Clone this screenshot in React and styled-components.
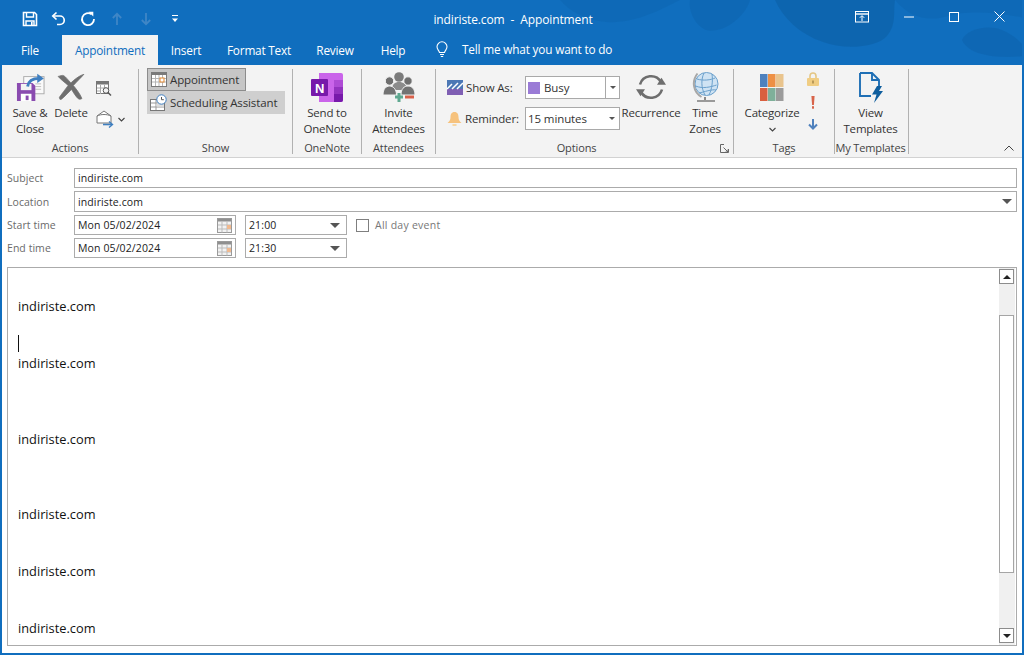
import React from 'react';
import styled, { createGlobalStyle } from 'styled-components';

const UI = `"Open Sans", "Noto Sans", "Liberation Sans", sans-serif`;
const Global = createGlobalStyle`
  html, body { margin: 0; padding: 0; background: #fff; }
  * { box-sizing: border-box; }
  body { font-family: ${UI}; font-size: 11.5px; color: #333; overflow: hidden; }
`;

const Window = styled.div`
  width: 1024px; height: 655px; display: flex; flex-direction: column;
  border: 2px solid #106ebe; border-top: 0; background: #fff; overflow: hidden;
`;
const Chrome = styled.div`
  position: relative; margin: 0 -2px; padding: 0 2px; height: 65px;
  background: #106ebe; flex: none; overflow: hidden;
`;
const Backdrop = styled.svg`
  position: absolute; inset: 0; width: 1024px; height: 65px;
`;
const TitleBar = styled.div`
  position: relative; height: 35px; display: grid; grid-template-columns: 1fr auto 1fr; align-items: center;
  padding-top: 2px; color: #fff;
`;
const Qat = styled.div`
  display: flex; align-items: center; gap: 13px; padding-left: 20px;
`;
const QatMoreSlot = styled.div`
  margin-left: 4px;
`;
const Title = styled.div`
  font-size: 12px; color: #fff; white-space: pre; letter-spacing: -0.12px; padding-top: 2px; padding-left: 2px;
`;
const WinControls = styled.div`
  display: flex; justify-content: flex-end; align-items: center; gap: 35px; padding-right: 17px; margin-top: -4px;
`;
const TabRow = styled.div`
  position: relative; height: 30px; display: flex; align-items: stretch;
`;
const Tab = styled.div`
  width: ${p => p.$w}px; display: flex; align-items: center; justify-content: center;
  font-size: 11.8px; letter-spacing: -0.2px; padding-bottom: 1px;
  color: ${p => p.$active ? '#106ebe' : '#fff'};
  background: ${p => p.$active ? '#f3f3f3' : 'transparent'};
  margin-right: ${p => p.$mr || 0}px;
`;
const TellMe = styled.div`
  display: flex; align-items: center; gap: 12px; color: #fff; font-size: 11.8px; letter-spacing: -0.18px; padding-left: 14px; padding-bottom: 2px;
`;
const Ribbon = styled.div`
  flex: none; height: 93px; background: #f3f3f3; border-bottom: 1px solid #d2d2d2;
  display: flex; padding-top: 4px; padding-bottom: 3px;
`;
const Group = styled.div`
  width: ${p => p.$w}px; display: flex; flex-direction: column; border-right: 1px solid #b1b1b1; height: 85px;
`;
const GroupBody = styled.div`
  flex: 1; display: flex; min-height: 0; padding-left: ${p => p.$pl || 0}px;
`;
const GroupLabel = styled.div`
  height: 12px; line-height: 12px; text-align: center; font-size: 11px; color: #444; white-space: nowrap;
  letter-spacing: -0.12px; display: flex; justify-content: center; position: relative;
  padding-right: ${p => p.$pr || 0}px;
`;
const Launcher = styled.svg`
  position: absolute; right: 3px; top: 2px;
`;
const Big = styled.div`
  width: ${p => p.$w}px; display: flex; flex-direction: column; align-items: center; flex: none;
  font-size: 11.5px; line-height: 16px; text-align: center; color: #333; letter-spacing: -0.2px; white-space: nowrap;
`;
const BigIcon = styled.div`
  height: 36px; display: flex; align-items: center; justify-content: center; width: 100%;
`;
const SmallCol = styled.div`
  display: flex; flex-direction: column; align-items: ${p => p.$align || 'flex-start'}; width: ${p => p.$w}px; flex: none;
  padding-top: ${p => p.$pt || 0}px; padding-left: ${p => p.$pl || 0}px; gap: ${p => p.$gap || 0}px;
`;
const SmallRow = styled.div`
  display: flex; align-items: center; gap: 4px;
`;
const ChevronLine = styled.div`
  height: 16px; display: flex; align-items: center;
`;
const ViewStack = styled.div`
  display: flex; flex-direction: column; padding: 0 0 0 8px; align-items: flex-start; margin-top: -1px;
`;
const ViewBtn = styled.div`
  height: 23px; width: ${p => p.$w}px; display: flex; align-items: center; gap: 3px; padding: 0 0 1px 3px;
  font-size: 11.5px; letter-spacing: -0.12px; color: #333; white-space: nowrap;
  background: ${p => p.$on ? '#c6c6c6' : '#cfcfcf'};
  border: ${p => p.$on ? '1px solid #8c8c8c' : '0'};
`;
const OptionLabel = styled.div`
  width: 89px; display: flex; align-items: center; gap: 3px; font-size: 11.5px; letter-spacing: -0.18px; color: #333; padding-left: 11px;
`;
const OptionRow = styled.div`
  display: flex; align-items: center; height: 23px; margin-bottom: 8px;
`;
const OptionStack = styled.div`
  display: flex; flex-direction: column; padding-top: 7px; flex: none; width: 184px;
`;
const RibbonSelect = styled.div`
  width: 95px; height: 23px; display: flex; align-items: center; background: #fff; border: 1px solid #a9a9a9;
  font-size: 11.5px; letter-spacing: -0.1px; color: #333; padding-left: 2px; gap: 4px; position: relative;
`;
const SelectArrow = styled.div`
  margin-left: auto; width: 14px; height: 100%; display: flex; align-items: center; justify-content: center;
  border-left: ${p => p.$split ? '1px solid #a9a9a9' : '0'};
`;
const Swatch = styled.div`
  width: 12px; height: 12px; background: #9a7bd6; flex: none;
`;
const Tri = styled.div`
  width: 0; height: 0; border-left: ${p => p.$s || 3}px solid transparent; border-right: ${p => p.$s || 3}px solid transparent;
  border-${p => p.$up ? 'bottom' : 'top'}: ${p => p.$h || 3}px solid ${p => p.$c || '#555'};
`;
const Collapse = styled.div`
  margin-left: auto; align-self: flex-end; padding: 0 8px 0 0; display: flex; height: 10px; margin-bottom: -1px;
`;

const Form = styled.div`
  flex: 1; min-height: 0; display: flex; flex-direction: column; padding: 10px 5px 7px 5px; background: #fff;
`;
const FieldRow = styled.div`
  display: flex; align-items: center; height: ${p => p.$h || 20}px; margin-bottom: ${p => p.$mb ?? 3}px; flex: none;
`;
const Label = styled.div`
  width: 67px; font-size: 10.5px; color: #6a6a6a; flex: none; letter-spacing: 0.05px;
`;
const Input = styled.div`
  flex: ${p => p.$w ? 'none' : 1}; width: ${p => p.$w ? `${p.$w}px` : 'auto'}; height: 100%;
  border: 1px solid #ababab; background: #fff; display: flex; align-items: center;
  padding: 0 3px; font-size: 10.5px; letter-spacing: 0.12px; color: #222; margin-right: ${p => p.$mr || 0}px;
`;
const InputEnd = styled.div`
  margin-left: auto; display: flex; align-items: center; padding-right: ${p => p.$pr || 0}px;
`;
const Check = styled.div`
  width: 13px; height: 13px; border: 1px solid #7f7f7f; background: #fff; flex: none; margin-right: 6px;
`;
const CheckLabel = styled.div`
  font-size: 10.5px; color: #777; letter-spacing: 0.25px;
`;
const Body = styled.div`
  flex: 1; min-height: 0; margin-top: 9px; border: 1px solid #ababab; display: flex; overflow: hidden;
`;
const Doc = styled.div`
  flex: 1; min-width: 0; padding: 10.5px 0 0 10px; font-family: "Open Sans", sans-serif; font-size: 12.8px; line-height: 18.9px; color: #111; overflow: hidden;
`;
const DocLine = styled.div`
  height: 18.9px; white-space: nowrap; position: relative;
`;
const Caret = styled.span`
  display: inline-block; width: 1px; height: 17px; background: #111; vertical-align: top; margin-top: 0;
`;
const Scrollbar = styled.div`
  width: 16px; flex: none; background: #f0f0f0; margin-right: 1px; display: flex; flex-direction: column; align-items: stretch;
  padding-top: 1px; padding-bottom: 2px;
`;
const ScrollBtn = styled.div`
  height: 15px; width: 15px; border: 1px solid #8c8c8c; background: #fff; display: flex; align-items: center; justify-content: center; flex: none;
`;
const Thumb = styled.div`
  width: 15px; height: 258px; background: #fff; border: 1px solid #a5a5a5; margin-top: 31px; margin-bottom: auto; flex: none;
`;

/* ---------- icons ---------- */
const IconSvg = styled.svg`
  display: block; flex: none;
`;
const Svg = ({ w, h, vw, vh, children }) => <IconSvg width={w} height={h} viewBox={`0 0 ${vw || w} ${vh || h}`} fill="none" preserveAspectRatio="none">{children}</IconSvg>;

const QatSave = () => <Svg w={16} h={16}><path d="M1.5 1.5h11l2 2v11h-13z" stroke="#fff" strokeWidth="1.6" /><path d="M4.5 2v4h7V2M4 14.5V10h8v4.5" stroke="#fff" strokeWidth="1.4" /><rect x="9" y="11" width="1.6" height="3" fill="#fff" /></Svg>;
const QatUndo = () => <Svg w={16} h={16}><path d="M5.5 1.5L1.8 5l3.7 3.5" stroke="#fff" strokeWidth="1.7" /><path d="M2 5h7a4.2 4.2 0 0 1 0 8.5H6" stroke="#fff" strokeWidth="1.7" /></Svg>;
const QatRedo = () => <Svg w={16} h={16}><path d="M11.5 3.3A6 6 0 1 0 14 8" stroke="#fff" strokeWidth="1.8" /><path d="M8.5 0.8h4.8v4.8z" fill="#fff" /></Svg>;
const QatUp = () => <Svg w={16} h={16}><path d="M8 14V3M3.8 7L8 2.8 12.2 7" stroke="#3f86c6" strokeWidth="1.8" /></Svg>;
const QatDown = () => <Svg w={16} h={16}><path d="M8 2v11M3.8 9L8 13.2 12.2 9" stroke="#3f86c6" strokeWidth="1.8" /></Svg>;
const QatMore = () => <Svg w={8} h={12}><path d="M1 2.5h6" stroke="#fff" strokeWidth="1" /><path d="M1 5.5h6L4 9z" fill="#fff" /></Svg>;

const Pop = () => <Svg w={14} h={12}><rect x=".5" y=".5" width="13" height="10.5" stroke="#fff" /><path d="M.5 3h13" stroke="#fff" strokeWidth="1.4" /><path d="M7 10V5M4.8 6.8L7 4.6l2.2 2.2" stroke="#fff" /></Svg>;
const Min = () => <Svg w={10} h={10}><path d="M0 5h10" stroke="#fff" /></Svg>;
const Max = () => <Svg w={10} h={10}><rect x=".5" y=".5" width="9" height="9" stroke="#fff" /></Svg>;
const Close = () => <Svg w={11} h={11}><path d="M.5.5l10 10M10.5.5l-10 10" stroke="#fff" /></Svg>;
const Bulb = () => <Svg w={16} h={18}><path d="M5.5 12.5C5 10.5 3 9.5 3 6.8a5 5 0 0 1 10 0c0 2.7-2 3.7-2.5 5.7z" stroke="#fff" strokeWidth="1.1" /><path d="M6 14.5h4M6.8 16.5h2.4" stroke="#fff" strokeWidth="1.1" /></Svg>;

const SaveClose = () => <Svg w={29} h={28} vw={30} vh={31}>
  <rect x="8" y="4" width="21" height="19" fill="#fafafa" stroke="#a9a9a9" />
  <path d="M20 12h6M20 15h6M20 18h6" stroke="#bdbdbd" />
  <path d="M1 11h16l3 3v17H1z" fill="#8a4bb0" />
  <rect x="5" y="12" width="11" height="7" fill="#f3f3f3" />
  <rect x="5" y="23" width="11" height="8" fill="#fff" />
  <rect x="10" y="25" width="3" height="5" fill="#8a4bb0" />
  <path d="M12 15c1-7 6-9 12-9" stroke="#3f7fc0" strokeWidth="3" />
  <path d="M22 .8L28.8 6 22 11z" fill="#3f7fc0" />
</Svg>;
const Delete = () => <Svg w={28} h={26} vw={30} vh={28}><path d="M1.2 2.6C4 2 5.5 1 7.2 1.8c2.3 1.2 5 5.2 7.7 7.8 3-3 9-8 14-9.4-3 3.5-8 8.4-11.4 12.2 3 3.6 7.2 9 9.2 14-1.8 1.2-3 1-4.6-.4-2-2-4.6-6.2-6.6-9.4C12 20 7.4 25.5 3.8 27.8 3 27 2.4 26 2.6 25c2.8-4 6.8-9 9.4-12.7C8.4 9 4 6 1.2 2.6z" fill="#6e6e6e" stroke="#6e6e6e" strokeWidth=".8" /></Svg>;
const CalSearch = () => <Svg w={16} h={15}><rect x=".5" y=".5" width="12" height="12" fill="#fff" stroke="#777" /><rect x=".5" y=".5" width="12" height="3" fill="#777" /><path d="M4.5 4v9M8.5 4v6M1 7h9M1 10h4" stroke="#aaa" /><circle cx="10" cy="9.5" r="2.8" fill="#f3f3f3" stroke="#555" /><path d="M12 11.5l3 3" stroke="#555" strokeWidth="1.4" /></Svg>;
const EnvArrow = () => <Svg w={18} h={18}><path d="M1 6l7-5 7 5v7H1z" fill="#fff" stroke="#777" /><path d="M1 6c4-2 10-2 14 0" stroke="#777" /><path d="M7 14.5h9" stroke="#3f7fc0" strokeWidth="1.6" /><path d="M13 11.5l3.5 3-3.5 3" stroke="#3f7fc0" strokeWidth="1.4" /></Svg>;
const Chevron = ({ c = '#444', up }) => <Svg w={7} h={5}><path d={up ? 'M.5 4L3.5 1l3 3' : 'M.5 1l3 3 3-3'} stroke={c} strokeWidth="1.1" /></Svg>;
const CalGrid = () => <Svg w={16} h={15}><rect x=".5" y=".5" width="15" height="14" fill="#fff" stroke="#7a7a7a" /><rect x=".5" y=".5" width="15" height="2.5" fill="#7a7a7a" /><path d="M4.5 3v11M8 3v11M11.5 3v11M1 6.5h14M1 10h14" stroke="#b5b5b5" /><rect x="9" y="6" width="4" height="4" fill="#fff" stroke="#e0862f" /></Svg>;
const Sched = () => <Svg w={17} h={17}><rect x=".5" y="5.5" width="14" height="11" fill="#fff" stroke="#777" /><path d="M1 9h13M6 6v10M1 13h13" stroke="#999" /><rect x="6.5" y="9.5" width="7.5" height="3" fill="#ddd" /><circle cx="11.5" cy="5.5" r="4.7" fill="#fff" stroke="#3f7fc0" /><path d="M11.5 3v2.7h2.3" stroke="#555" /></Svg>;
const OneNote = () => <Svg w={32} h={29}>
  <path d="M8 0h22a2 2 0 0 1 2 2v25a2 2 0 0 1-2 2H8z" fill="#ca64ea" />
  <rect x="23" y="7" width="9" height="7" fill="#ae4bd5" />
  <rect x="23" y="14" width="9" height="7" fill="#9332bf" />
  <path d="M23 21h9v6a2 2 0 0 1-2 2h-7z" fill="#7719aa" />
  <rect x="0" y="6" width="17" height="17" rx="1" fill="#7719aa" />
  <text x="8.5" y="19.6" textAnchor="middle" fontFamily='"Liberation Sans", sans-serif' fontWeight="700" fontSize="13" fill="#fff">N</text>
</Svg>;
const Invite = () => <Svg w={32} h={32}>
  <circle cx="16" cy="6" r="4.8" fill="#7b7b7b" />
  <path d="M9 19c0-6 3-8 7-8s8 2 8 8z" fill="#8c8c8c" />
  <circle cx="6.5" cy="10" r="4.2" fill="#6f6f6f" stroke="#f3f3f3" />
  <path d="M0 24c0-6 3-9 6.5-9s7 3 7 9z" fill="#737373" stroke="#f3f3f3" />
  <circle cx="25" cy="10" r="4.2" fill="#6f6f6f" stroke="#f3f3f3" />
  <path d="M18 24c0-6 3-9 7-9s7 3 7 9z" fill="#737373" stroke="#f3f3f3" />
  <path d="M12 26h8M16 22v9" stroke="#5fa890" strokeWidth="3" />
  <path d="M22 26h9" stroke="#d9614a" strokeWidth="3" />
</Svg>;
const ShowAs = () => <Svg w={16} h={15}><rect width="16" height="9" fill="#4c78b5" /><rect y="9" width="16" height="6" fill="#7f5fb3" /><path d="M0 9l5-5M5 9l6-6M10 9l6-6" stroke="#fff" strokeWidth="1.5" /></Svg>;
const Bell = () => <Svg w={15} h={16}><path d="M7.5 1c-3 0-4 2.5-4 5 0 3-1 4.5-3 6h14c-2-1.5-3-3-3-6 0-2.5-1-5-4-5z" fill="#f6c27d" /><rect x="5.5" y="13" width="4" height="2" fill="#f6d6a4" /></Svg>;
const Recur = () => <Svg w={32} h={28}>
  <path d="M5 11.5A11.5 11.5 0 0 1 26 9" stroke="#6e6e6e" strokeWidth="2.6" />
  <path d="M22 11.8h9l-4.5 -7z" fill="#6e6e6e" />
  <path d="M27 16.5A11.5 11.5 0 0 1 6 19" stroke="#6e6e6e" strokeWidth="2.6" />
  <path d="M1 16.2h9l-4.5 7z" fill="#6e6e6e" />
</Svg>;
const Globe = () => <Svg w={27} h={32}>
  <circle cx="14.5" cy="13" r="11.5" fill="#cfe3f3" stroke="#6aa0cc" />
  <path d="M5 8c6 2 14 1 18-1M3.6 15c7 3 15 1 21-1M7 22c5-1 13-4 17-3M12 2c-3 6-3 15 1 22M20 3c1 7 0 15-3 21" stroke="#6aa0cc" />
  <path d="M5.5 2.5C-.5 10 1 21 9.5 26" stroke="#a7a7a7" strokeWidth="2" />
  <path d="M13 26v3" stroke="#8a8a8a" strokeWidth="2" />
  <rect x="5" y="29" width="18" height="2" fill="#9a9a9a" />
</Svg>;
const Cat = () => <Svg w={24} h={27}>
  {[['#4f81bd', 0, 0], ['#ee9044', 8, 0], ['#e9c48d', 16, 0], ['#d9603f', 0, 14], ['#7fb09a', 8, 14], ['#9b9b9b', 16, 14]].map(([c, x, y]) => <rect key={c} x={x} y={y} width="7.5" height="13" fill={c} />)}
</Svg>;
const Lock = () => <Svg w={12} h={14}><path d="M3 6V4a3 3 0 0 1 6 0v2" stroke="#e4c685" strokeWidth="1.6" /><rect y="6" width="12" height="8" rx="1" fill="#f0cd83" /><rect x="5" y="8.5" width="2" height="3" fill="#b99a5a" /></Svg>;
const Bang = () => <Svg w={4} h={13}><path d="M.4 0h3.2L2.9 9H1.1z" fill="#d8644a" /><rect x="1" y="10.2" width="2" height="2.5" fill="#d8644a" /></Svg>;
const LowArrow = () => <Svg w={10} h={11}><path d="M5 0v9M1 5.5L5 9.5 9 5.5" stroke="#4f81bd" strokeWidth="2" /></Svg>;
const Template = () => <Svg w={24} h={31}>
  <path d="M1 1h12l7 7v8M13 1v7h7M1 1v23h11" stroke="#1f6fb5" strokeWidth="1.9" />
  <path d="M18 14h5l-3 5h4l-9 12 2.5-8.5H13z" fill="#0f5e9e" />
</Svg>;
const FormCal = () => <Svg w={15} h={15}><rect x=".5" y=".5" width="14" height="14" fill="#f2f2f2" stroke="#9a9a9a" /><rect x="1" y="1" width="13" height="2.5" fill="#8f8f8f" /><path d="M5 3.5v11M10 3.5v11M1 7h13M1 11h13" stroke="#bbb" /><rect x="10" y="7" width="4" height="4" fill="#f0b98f" /></Svg>;

const doc = ['', 'indiriste.com', '', 'caret', 'indiriste.com', '', '', '', 'indiriste.com', '', '', '', 'indiriste.com', '', '', 'indiriste.com', '', '', 'indiriste.com'];

export default function App() {
  return (
    <>
      <Global />
      <Window>
        <Chrome>
          <Backdrop viewBox="0 0 1024 65">
            <g fill="#0b5a9e">
              <path d="M775 0h120c-2 12 2 24-8 36-10 12-44 14-64 6-24-8-40-24-48-42z" opacity=".45" />
              <path d="M895 0h129v18c-26-6-58-8-76-2-20 6-38 2-53-16z" opacity=".22" />
              <path d="M962 40c4-10 24-16 40-10 10 4 20 12 22 18v8c-20 2-54 2-62-16z" opacity=".32" />
              <path d="M560 0h120c-20 10-46 24-74 22-20-2-36-10-46-22z" opacity=".22" />
              <path d="M690 0h60c-6 20-30 34-44 30-10-4-18-18-16-30z" opacity=".28" />
            </g>
          </Backdrop>
          <TitleBar>
            <Qat>
              <QatSave /><QatUndo /><QatRedo /><QatUp /><QatDown /><QatMoreSlot><QatMore /></QatMoreSlot>
            </Qat>
            <Title>indiriste.com  -  Appointment</Title>
            <WinControls><Pop /><Min /><Max /><Close /></WinControls>
          </TitleBar>
          <TabRow>
            <Tab $w={56} $mr={4}>File</Tab>
            <Tab $w={96} $active>Appointment</Tab>
            <Tab $w={56}>Insert</Tab>
            <Tab $w={90}>Format Text</Tab>
            <Tab $w={62}>Review</Tab>
            <Tab $w={54}>Help</Tab>
            <TellMe><Bulb />Tell me what you want to do</TellMe>
          </TabRow>
        </Chrome>
        <Ribbon>
          <Group $w={137}>
            <GroupBody $pl={4}>
              <Big $w={48}><BigIcon><SaveClose /></BigIcon>Save &amp;<br />Close</Big>
              <Big $w={34}><BigIcon><Delete /></BigIcon>Delete</Big>
              <SmallCol $w={40} $pt={12} $pl={8} $gap={14}>
                <CalSearch />
                <SmallRow><EnvArrow /><Chevron /></SmallRow>
              </SmallCol>
            </GroupBody>
            <GroupLabel>Actions</GroupLabel>
          </Group>
          <Group $w={154}>
            <GroupBody>
              <ViewStack>
                <ViewBtn $w={99} $on><CalGrid />Appointment</ViewBtn>
                <ViewBtn $w={138}><Sched />Scheduling Assistant</ViewBtn>
              </ViewStack>
            </GroupBody>
            <GroupLabel>Show</GroupLabel>
          </Group>
          <Group $w={69}>
            <GroupBody><Big $w={68}><BigIcon><OneNote /></BigIcon>Send to<br />OneNote</Big></GroupBody>
            <GroupLabel>OneNote</GroupLabel>
          </Group>
          <Group $w={74}>
            <GroupBody><Big $w={73}><BigIcon><Invite /></BigIcon>Invite<br />Attendees</Big></GroupBody>
            <GroupLabel>Attendees</GroupLabel>
          </Group>
          <Group $w={298}>
            <GroupBody>
              <OptionStack>
                <OptionRow>
                  <OptionLabel><ShowAs />Show As:</OptionLabel>
                  <RibbonSelect><Swatch />Busy<SelectArrow $split><Tri /></SelectArrow></RibbonSelect>
                </OptionRow>
                <OptionRow>
                  <OptionLabel><Bell />Reminder:</OptionLabel>
                  <RibbonSelect>15 minutes<SelectArrow><Tri /></SelectArrow></RibbonSelect>
                </OptionRow>
              </OptionStack>
              <Big $w={62}><BigIcon><Recur /></BigIcon>Recurrence</Big>
              <Big $w={46}><BigIcon><Globe /></BigIcon>Time<br />Zones</Big>
            </GroupBody>
            <GroupLabel $pr={16}>Options
              <Launcher width="10" height="9" viewBox="0 0 10 9" fill="none"><path d="M4 .5H.5v8h8V5M3.5 3.5L8 8M5.5 8H8V5.5" stroke="#666" /></Launcher>
            </GroupLabel>
          </Group>
          <Group $w={101}>
            <GroupBody $pl={5}>
              <Big $w={66}><BigIcon><Cat /></BigIcon>Categorize<ChevronLine><Chevron /></ChevronLine></Big>
              <SmallCol $w={16} $align="center" $pt={3} $gap={10}>
                <Lock /><Bang /><LowArrow />
              </SmallCol>
            </GroupBody>
            <GroupLabel>Tags</GroupLabel>
          </Group>
          <Group $w={74}>
            <GroupBody><Big $w={71}><BigIcon><Template /></BigIcon>View<br />Templates</Big></GroupBody>
            <GroupLabel $pr={2}>My Templates</GroupLabel>
          </Group>
          <Collapse><Svg w={10} h={6}><path d="M.5 5.5L5 1l4.5 4.5" stroke="#444" /></Svg></Collapse>
        </Ribbon>
        <Form>
          <FieldRow><Label>Subject</Label><Input>indiriste.com</Input></FieldRow>
          <FieldRow $h={21}><Label>Location</Label><Input>indiriste.com<InputEnd $pr={1}><Tri $s={5} $h={5} /></InputEnd></Input></FieldRow>
          <FieldRow>
            <Label>Start time</Label>
            <Input $w={162} $mr={9}>Mon 05/02/2024<InputEnd $pr={0}><FormCal /></InputEnd></Input>
            <Input $w={102} $mr={9}>21:00<InputEnd $pr={3}><Tri $s={5} $h={5} /></InputEnd></Input>
            <Check /><CheckLabel>All day event</CheckLabel>
          </FieldRow>
          <FieldRow $mb={0}>
            <Label>End time</Label>
            <Input $w={162} $mr={9}>Mon 05/02/2024<InputEnd $pr={0}><FormCal /></InputEnd></Input>
            <Input $w={102}>21:30<InputEnd $pr={3}><Tri $s={5} $h={5} /></InputEnd></Input>
          </FieldRow>
          <Body>
            <Doc>{doc.map((l, i) => <DocLine key={i}>{l === 'caret' ? <Caret /> : l}</DocLine>)}</Doc>
            <Scrollbar>
              <ScrollBtn><Tri $s={4} $h={4} $up $c="#222" /></ScrollBtn>
              <Thumb />
              <ScrollBtn><Tri $s={4} $h={4} $c="#222" /></ScrollBtn>
            </Scrollbar>
          </Body>
        </Form>
      </Window>
    </>
  );
}
